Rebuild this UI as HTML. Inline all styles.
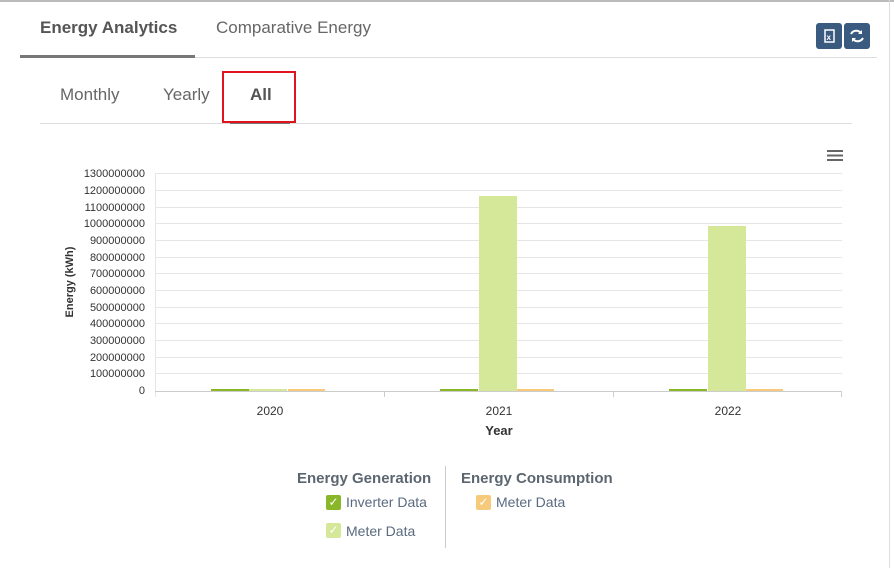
<!DOCTYPE html>
<html><head><style>
body{margin:0;width:894px;height:568px;background:#fff;font-family:"Liberation Sans",sans-serif;position:relative;overflow:hidden}
.a{position:absolute;white-space:nowrap}
</style></head><body>
<div class="a" style="left:0;top:0;width:894px;height:2px;background:#bbb"></div>
<div class="a" style="left:889px;top:0;width:1px;height:568px;background:#ddd"></div>
<div class="a" style="left:40px;top:18px;font-size:17px;font-weight:bold;color:#555">Energy Analytics</div>
<div class="a" style="left:216px;top:18px;font-size:17px;color:#666">Comparative Energy</div>
<div class="a" style="left:20px;top:57px;width:857px;height:1px;background:#ddd"></div>
<div class="a" style="left:20px;top:55px;width:175px;height:3px;background:#777"></div>
<div class="a" style="left:816px;top:23px;width:26px;height:26px;background:#3a5a80;border-radius:3px"></div>
<div class="a" style="left:844px;top:23px;width:26px;height:26px;background:#3a5a80;border-radius:3px"></div>
<svg class="a" style="left:816px;top:23px" width="56" height="26"><rect x="9" y="7" width="9" height="12" fill="none" stroke="#fff" stroke-width="1.5"/><text x="10.5" y="17" font-size="8" fill="#fff" font-family="Liberation Sans" font-weight="bold">x</text><path d="M35 11a6 6 0 0 1 10-1M47 15a6 6 0 0 1-10 1" stroke="#fff" stroke-width="2" fill="none"/><path d="M46 7v4h-4zM36 19v-4h4z" fill="#fff"/></svg>
<div class="a" style="left:60px;top:85px;font-size:17px;color:#666">Monthly</div>
<div class="a" style="left:163px;top:85px;font-size:17px;color:#666">Yearly</div>
<div class="a" style="left:250px;top:85px;font-size:17px;font-weight:bold;color:#555">All</div>
<div class="a" style="left:40px;top:123px;width:812px;height:1px;background:#ddd"></div>
<div class="a" style="left:230px;top:121px;width:60px;height:3px;background:#777"></div>
<div class="a" style="left:222px;top:71px;width:70px;height:48px;border:2px solid #e0141e"></div>
<svg class="a" style="left:0;top:140px" width="894" height="310">
<g stroke="#e6e6e6" stroke-width="1">
<line x1="155" x2="842" y1="33.5" y2="33.5"/><line x1="155" x2="842" y1="50.5" y2="50.5"/><line x1="155" x2="842" y1="67.5" y2="67.5"/><line x1="155" x2="842" y1="83.5" y2="83.5"/><line x1="155" x2="842" y1="100.5" y2="100.5"/><line x1="155" x2="842" y1="117.5" y2="117.5"/><line x1="155" x2="842" y1="133.5" y2="133.5"/><line x1="155" x2="842" y1="150.5" y2="150.5"/><line x1="155" x2="842" y1="167.5" y2="167.5"/><line x1="155" x2="842" y1="183.5" y2="183.5"/><line x1="155" x2="842" y1="200.5" y2="200.5"/><line x1="155" x2="842" y1="217.5" y2="217.5"/><line x1="155" x2="842" y1="233.5" y2="233.5"/>
<line x1="155.5" x2="155.5" y1="33" y2="257"/>
</g>
<line x1="155" x2="842" y1="251.5" y2="251.5" stroke="#ccc"/>
<g stroke="#ccc"><line x1="384.5" x2="384.5" y1="251" y2="257"/><line x1="613.5" x2="613.5" y1="251" y2="257"/><line x1="841.5" x2="841.5" y1="251" y2="257"/></g>
<g fill="#8ab62a"><rect x="211" y="249" width="38" height="2"/><rect x="440" y="249" width="38" height="2"/><rect x="669" y="249" width="38" height="2"/></g>
<g fill="#d5e89a"><rect x="249" y="249" width="38" height="2"/><rect x="479" y="56" width="38" height="195"/><rect x="708" y="86" width="38" height="165"/></g>
<g fill="#f7c97a"><rect x="288" y="249" width="37" height="2"/><rect x="517" y="249" width="37" height="2"/><rect x="746" y="249" width="37" height="2"/></g>
<g font-family="Liberation Sans" font-size="11" fill="#333" text-anchor="end">
<text x="145" y="37">1300000000</text><text x="145" y="54">1200000000</text><text x="145" y="71">1100000000</text><text x="145" y="87">1000000000</text><text x="145" y="104">900000000</text><text x="145" y="121">800000000</text><text x="145" y="137">700000000</text><text x="145" y="154">600000000</text><text x="145" y="171">500000000</text><text x="145" y="187">400000000</text><text x="145" y="204">300000000</text><text x="145" y="221">200000000</text><text x="145" y="237">100000000</text><text x="145" y="254">0</text>
</g>
<g font-family="Liberation Sans" font-size="12" fill="#333" text-anchor="middle"><text x="270" y="275">2020</text><text x="499" y="275">2021</text><text x="728" y="275">2022</text>
<text x="499" y="295" font-weight="bold" font-size="13">Year</text></g>
<text transform="translate(73,142) rotate(-90)" text-anchor="middle" font-family="Liberation Sans" font-size="11" font-weight="bold" fill="#333">Energy (kWh)</text>
<g stroke="#666" stroke-width="2"><line x1="827" x2="843" y1="11" y2="11"/><line x1="827" x2="843" y1="15.5" y2="15.5"/><line x1="827" x2="843" y1="20" y2="20"/></g>
</svg>
<div class="a" style="left:297px;top:470px;font-size:15px;font-weight:bold;color:#5c6670">Energy Generation</div>
<div class="a" style="left:461px;top:470px;font-size:15px;font-weight:bold;color:#5c6670">Energy Consumption</div>
<div class="a" style="left:445px;top:466px;width:1px;height:82px;background:#ccc"></div>
<div class="a" style="left:326px;top:495px;width:15px;height:15px;background:#8ab62a;border-radius:2px;color:#fff;font-size:12px;text-align:center;line-height:15px">✓</div>
<div class="a" style="left:346px;top:494px;font-size:14px;color:#5a6a80">Inverter Data</div>
<div class="a" style="left:326px;top:523px;width:15px;height:15px;background:#d5e89a;border-radius:2px;color:#fff;font-size:12px;text-align:center;line-height:15px">✓</div>
<div class="a" style="left:346px;top:523px;font-size:14px;color:#5a6a80">Meter Data</div>
<div class="a" style="left:476px;top:495px;width:15px;height:15px;background:#f7c97a;border-radius:2px;color:#fff;font-size:12px;text-align:center;line-height:15px">✓</div>
<div class="a" style="left:496px;top:494px;font-size:14px;color:#5a6a80">Meter Data</div>
</body></html>
